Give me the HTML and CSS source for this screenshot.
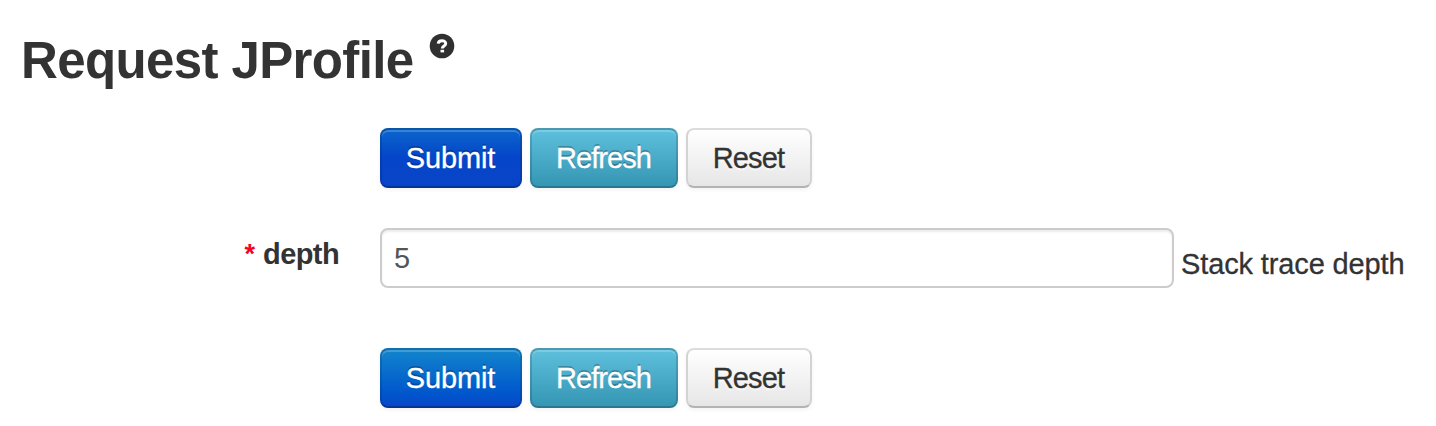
FILE: index.html
```
<!DOCTYPE html>
<html lang="en">
<head>
<meta charset="utf-8">
<title>Request JProfile</title>
<link rel="stylesheet" href="styles.css">
</head>
<body>
<form class="page">
  <h1 class="title"><span class="title-text">Request JProfile</span>
    <svg class="help" viewBox="0 0 26 26"><circle cx="13" cy="13" r="12.3" fill="#303030"/><path d="M9.2 10.6C9.5 6.8 16.7 6.7 16.7 10.5C16.7 13 13.3 12.8 13.3 15.4" fill="none" stroke="#fff" stroke-width="3"/><rect x="11.5" y="16.8" width="3.6" height="2.6" fill="#fff"/></svg>
  </h1>
  <div class="actions">
    <button type="button" class="btn primary pressed"><span class="w-submit">Submit</span></button>
    <button type="button" class="btn info"><span class="w-refresh">Refresh</span></button>
    <button type="button" class="btn plain"><span class="w-reset">Reset</span></button>
  </div>
  <div class="field">
    <label class="label" for="depth"><span class="star">*</span><span class="label-text">depth</span></label>
    <input class="input" id="depth" type="text" value="5">
    <span class="hint">Stack trace depth</span>
  </div>
  <div class="actions">
    <button type="button" class="btn primary"><span class="w-submit">Submit</span></button>
    <button type="button" class="btn info"><span class="w-refresh">Refresh</span></button>
    <button type="button" class="btn plain"><span class="w-reset">Reset</span></button>
  </div>
</form>
</body>
</html>
```
FILE: styles.css
```
* { box-sizing: border-box; }
body {
  margin: 0;
  background: #fff;
  color: #333;
  font-family: "Liberation Sans", Arial, sans-serif;
  font-size: 29px;
  line-height: 40px;
}
.page { margin: 0; height: 426px; overflow: hidden; }
.title {
  display: flex;
  align-items: flex-start;
  gap: 16px;
  height: 128px;
  margin: 0;
  padding: 32px 0 0 21px;
  font-size: 51px;
  line-height: 60px;
}
.title-text {
  width: 392px;
  margin-top: -1px;
  letter-spacing: -0.62px;
  white-space: nowrap;
}
.help { width: 26px; height: 26px; margin-top: 1px; }
.actions { display: flex; gap: 8px; height: 60px; padding-left: 380px; }
.btn {
  height: 60px;
  padding: 0;
  border: 2px solid;
  border-radius: 8px;
  font: inherit;
  box-shadow: inset 0 2px 0 rgba(255, 255, 255, .2), 0 2px 4px rgba(0, 0, 0, .05);
}
.btn span { display: block; white-space: nowrap; -webkit-text-stroke: .3px currentColor; }
.w-submit { margin-right: 1px; letter-spacing: -0.1px; }
.w-refresh { margin-right: 1px; letter-spacing: -0.95px; }
.w-reset { margin-right: 1px; letter-spacing: -0.85px; }
.primary { width: 142px; }
.info { width: 148px; }
.plain { width: 126px; }
.primary, .info { color: #fff; text-shadow: 0 -2px 0 rgba(0, 0, 0, .25); }
.primary {
  border-color: rgba(0, 0, 0, .16) rgba(0, 0, 0, .12) rgba(0, 0, 0, .25);
  background: linear-gradient(#1386cc, #0057cc 75%, #0a44c8) border-box;
}
.pressed { background: linear-gradient(#0b66cc, #0445c9 50%, #0a44c8) border-box; }
.info {
  border-color: rgba(0, 0, 0, .2) rgba(0, 0, 0, .14) rgba(0, 0, 0, .2);
  background: linear-gradient(#5fc1dd, #3495b3) border-box;
}
.plain {
  border-color: #dcdcdc #d3d3d3 #b3b3b3;
  background: linear-gradient(#fff, #e6e6e6);
  color: #333;
  text-shadow: 0 2px 2px rgba(255, 255, 255, .75);
}
.field { display: flex; height: 160px; padding-top: 40px; }
.label {
  display: flex;
  justify-content: flex-end;
  gap: 8px;
  width: 339px;
  padding-top: 6px;
  font-weight: bold;
}
.label-text { letter-spacing: -0.6px; }
.star { color: #f9001e; font-size: 27px; }
.input {
  width: 794px;
  height: 60px;
  margin: 0 7px 0 41px;
  padding: 0 12px;
  border: 2px solid #ccc;
  border-radius: 8px;
  box-shadow: inset 0 2px 2px rgba(0, 0, 0, .075);
  color: #555;
  font: inherit;
}
.hint {
  padding-top: 16px;
  letter-spacing: -0.13px;
  white-space: nowrap;
  -webkit-text-stroke: .3px currentColor;
}
```
